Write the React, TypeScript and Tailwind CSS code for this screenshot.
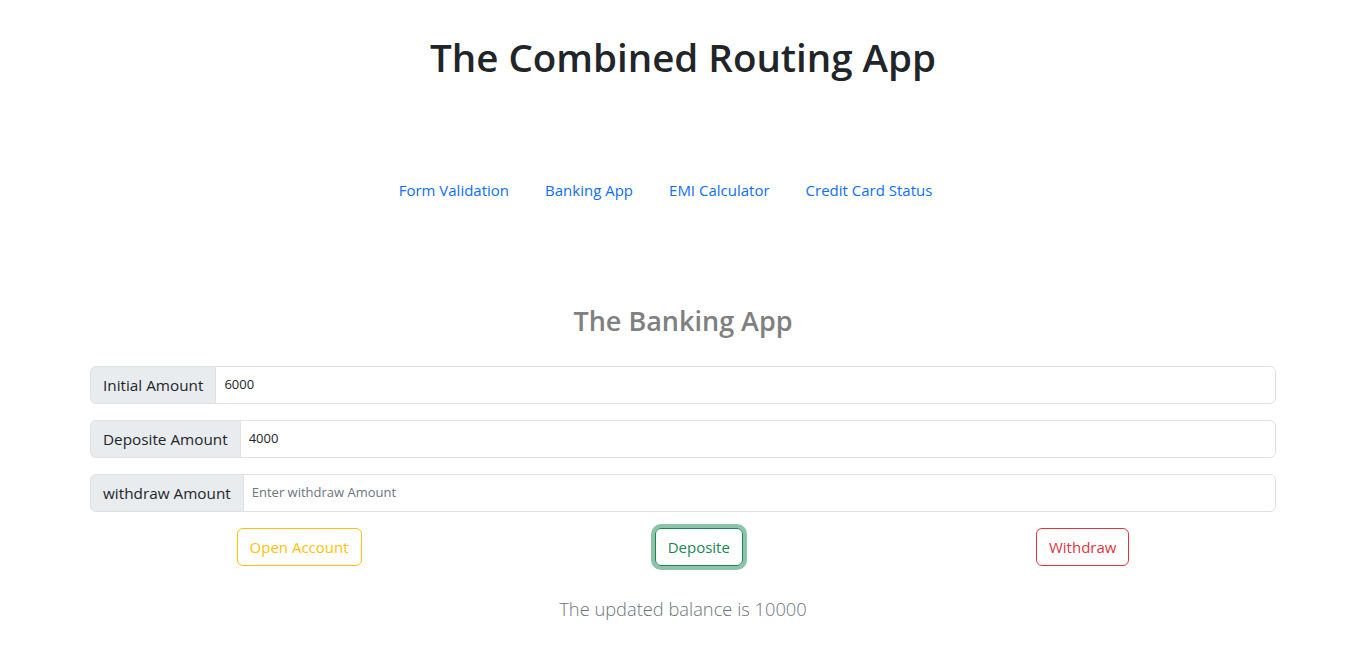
import { useState } from "react";

const links = ["Form Validation", "Banking App", "EMI Calculator", "Credit Card Status"];

function AmountField({ label, value, placeholder }: { label: string; value?: string; placeholder: string }) {
  return (
    <div className="flex h-[38px] w-full">
      <span className="flex items-center px-3 bg-[#e9ecef] border border-[#dee2e6] rounded-l-[6px] text-[15.3px] text-[#212529] whitespace-nowrap">
        {label}
      </span>
      <input
        type="text"
        defaultValue={value}
        placeholder={placeholder}
        className="flex-1 min-w-0 -ml-px border border-[#dee2e6] rounded-r-[6px] px-2 text-[13px] text-[#212529] placeholder:text-[#6c757d] outline-none"
      />
    </div>
  );
}

export default function App() {
  const [balance] = useState(10000);

  return (
    <main className="min-h-screen bg-white pl-[9px] font-['Open_Sans',_'Noto_Sans',sans-serif] text-[#212529]">
      <h1 className="pt-[33px] text-center text-[38.5px] leading-[48px] font-semibold">
        The Combined Routing App
      </h1>

      <nav className="mt-[89px] mr-[35px] flex justify-center">
        {links.map((link) => (
          <a key={link} href="#" className="px-[18px] py-2 text-[15px] leading-6 text-[#0d6efd]">
            {link}
          </a>
        ))}
      </nav>

      <h2 className="mt-[94px] text-center text-[27px] leading-[34px] font-semibold text-[#808080]">
        The Banking App
      </h2>

      <div className="mx-[81px] mt-[28px] flex flex-col gap-4">
        <AmountField label="Initial Amount" value="6000" placeholder="Enter initial Amount" />
        <AmountField label="Deposite Amount" value="4000" placeholder="Enter deposite Amount" />
        <AmountField label="withdraw Amount" placeholder="Enter withdraw Amount" />
      </div>

      <div className="mx-[81px] mt-4 flex justify-around">
        <button className="h-[38px] px-3 border border-[#ffc107] rounded-[6px] text-[15px] text-[#ffc107]">
          Open Account
        </button>
        <button className="h-[38px] px-3 border border-[#198754] rounded-[6px] text-[15px] text-[#198754] ring-4 ring-[#198754]/50">
          Deposite
        </button>
        <button className="h-[38px] px-3 border border-[#dc3545] rounded-[6px] text-[15px] text-[#dc3545]">
          Withdraw
        </button>
      </div>

      <p className="mt-7 text-center text-[18.3px] leading-[30px] font-light text-[#6c757d]">
        The updated balance is {balance}
      </p>
    </main>
  );
}
